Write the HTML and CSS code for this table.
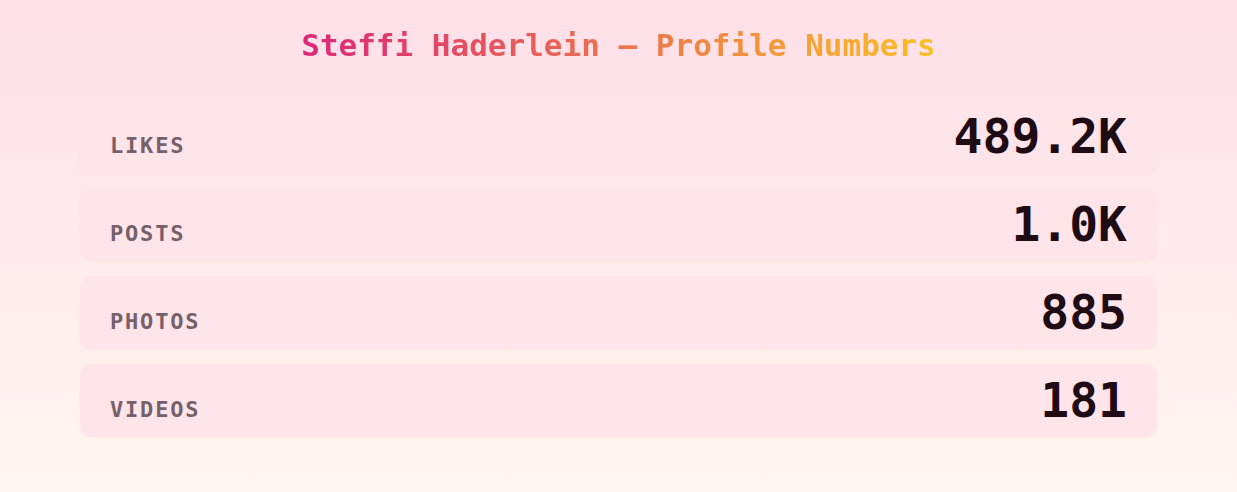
FILE: index.html
```html
<!DOCTYPE html>
<html lang="en">
<head>
    <meta charset="UTF-8">
    <meta name="viewport" content="width=device-width, initial-scale=1.0">
    <title>Steffi Haderlein - Profile Numbers</title>
    <link rel="stylesheet" href="styles.css">
</head>
<body>

    <div class="container">
        <h1 class="title">Steffi Haderlein — Profile Numbers</h1>

        <div class="stat-list">
            <div class="stat-card">
                <span class="stat-label">Likes</span>
                <span class="stat-value">489.2K</span>
            </div>
            <div class="stat-card">
                <span class="stat-label">Posts</span>
                <span class="stat-value">1.0K</span>
            </div>
            <div class="stat-card">
                <span class="stat-label">Photos</span>
                <span class="stat-value">885</span>
            </div>
            <div class="stat-card">
                <span class="stat-label">Videos</span>
                <span class="stat-value">181</span>
            </div>
        </div>
    </div>

</body>
</html>
```

FILE: styles.css
```css
body {
    font-family: 'DejaVu Sans Mono', 'Liberation Mono', monospace;
    margin: 0;
    padding: 0;
    background: linear-gradient(to bottom, #ffdfe8, #fff6f1); /* soft pink to cream */
    min-height: 100vh;
}

.container {
    padding: 30px 80px 0;
}

/* gradient text, box shrunk to the words */
.title {
    width: fit-content;
    margin: 0 auto 39px;
    font-size: 31px;
    line-height: 1;
    font-weight: bold;
    background: linear-gradient(90deg, #db2777, #fbbf24);
    -webkit-background-clip: text;
    background-clip: text;
    color: transparent;
}

.stat-list {
    display: flex;
    flex-direction: column;
    gap: 15px;
}

.stat-card {
    display: flex;
    justify-content: space-between;
    align-items: baseline;
    padding: 12px 30px 13px;
    background-color: #ffe4ea;
    border-radius: 12px;
    box-shadow: 0 1px 3px rgba(220, 150, 170, 0.08);
}

.stat-label {
    font-size: 22px;
    font-weight: bold;
    letter-spacing: 1.8px;
    text-transform: uppercase;
    color: #76606a;
}

.stat-value {
    font-size: 48px;
    line-height: 1;
    font-weight: bold;
    color: #1e0b14;
}
```
